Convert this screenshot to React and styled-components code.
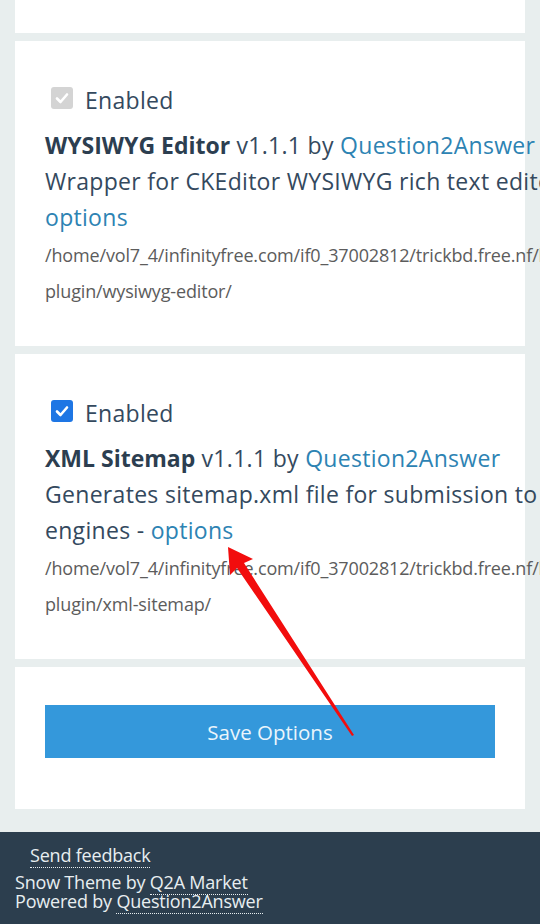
import React from "react";
import styled, { createGlobalStyle } from "styled-components";

const Global = createGlobalStyle`
  html, body { margin: 0; padding: 0; overflow-x: hidden; }
  body {
    background: #e8eeee;
    font-family: "Open Sans", "Noto Sans", sans-serif;
    color: #34495e;
  }
`;

const Page = styled.div`
  position: relative;
  width: 540px;
  overflow: hidden;
`;

const Main = styled.main`
  display: flex;
  flex-direction: column;
  gap: 8px;
  padding: 0 15px;
`;

const Card = styled.section`
  background: #ffffff;
  width: 510px;
  box-sizing: border-box;
  padding: ${(p) => p.$pad || "0"};
  height: ${(p) => (p.$height ? `${p.$height}px` : "auto")};
`;

const Inner = styled.div`
  width: 585px;
  font-size: 23px;
  letter-spacing: 0.3px;
  line-height: 36px;
`;

const EnabledRow = styled.label`
  display: flex;
  align-items: center;
  gap: 12px;
  height: 36px;
  padding-left: 6px;
  color: #34495e;
`;

const Box = styled.span`
  width: 22px;
  height: 22px;
  border-radius: 3px;
  display: flex;
  align-items: center;
  justify-content: center;
  margin-top: -5px;
  background: ${(p) => (p.$disabled ? "#d4d4d4" : "#1e76e4")};
  svg { display: block; }
`;

const Title = styled.div`
  margin-top: 9px;
  color: #34495e;
  b { color: #2c3e50; font-weight: 700; letter-spacing: 0; }
`;

const Link = styled.a`
  color: #2d83b3;
  text-decoration: none;
`;

const Path = styled.div`
  margin-top: 2px;
  font-size: 18px;
  letter-spacing: -0.15px;
  color: #5c5c5c;
`;

const SaveButton = styled.button`
  display: block;
  width: 100%;
  height: 53px;
  border: none;
  background: #3498db;
  color: #eaf5fc;
  font-family: "Open Sans", "Noto Sans", sans-serif;
  font-size: 20.5px;
`;

const Footer = styled.footer`
  margin-top: 23px;
  background: #2c3e4e;
  color: #e8eef1;
  padding: 11px 15px 30px;
  font-size: 18px;
  letter-spacing: -0.2px;
  line-height: 19px;
`;

const FootLink = styled.a`
  color: #e8eef1;
  text-decoration: none;
  border-bottom: 1px dotted #e8eef1;
`;

const FeedbackRow = styled.div`
  padding-left: 15px;
  margin-bottom: 6px;
  line-height: 24px;
`;

const ArrowLayer = styled.svg`
  position: absolute;
  left: 0;
  top: 0;
  pointer-events: none;
`;

const Check = () => (
  <svg width="16" height="16" viewBox="0 0 16 16">
    <path d="M3 8.5 L6.5 12 L13 4.5" fill="none" stroke="#fff" strokeWidth="2.6" strokeLinecap="round" strokeLinejoin="round" />
  </svg>
);

const Plugin = ({ disabled, name, desc, path }) => (
  <Card $pad="41px 30px 37px 30px">
    <Inner>
      <EnabledRow>
        <Box $disabled={disabled}><Check /></Box>
        Enabled
      </EnabledRow>
      <Title>
        <b>{name}</b> v1.1.1 by <Link href="#">Question2Answer</Link>
        <br />
        {desc} - <Link href="#">options</Link>
      </Title>
      <Path>{path}</Path>
    </Inner>
  </Card>
);

export default function App() {
  return (
    <Page>
      <Global />
      <Main>
        <Card $height={33} />
        <Plugin
          disabled
          name="WYSIWYG Editor"
          desc="Wrapper for CKEditor WYSIWYG rich text editor"
          path="/home/vol7_4/infinityfree.com/if0_37002812/trickbd.free.nf/htdocs/qa-plugin/wysiwyg-editor/"
        />
        <Plugin
          name="XML Sitemap"
          desc="Generates sitemap.xml file for submission to search engines"
          path="/home/vol7_4/infinityfree.com/if0_37002812/trickbd.free.nf/htdocs/qa-plugin/xml-sitemap/"
        />
        <Card $pad="38px 30px 51px 30px">
          <SaveButton>Save Options</SaveButton>
        </Card>
      </Main>
      <Footer>
        <FeedbackRow>
          <FootLink href="#">Send feedback</FootLink>
        </FeedbackRow>
        <div>Snow Theme by <FootLink href="#">Q2A Market</FootLink></div>
        <div>Powered by <FootLink href="#">Question2Answer</FootLink></div>
      </Footer>
      <ArrowLayer width="540" height="924" viewBox="0 0 540 924">
        <polygon points="228,547 253,559 244,563 354,735 352,736 237,568 230,575" fill="#f20d0d" />
      </ArrowLayer>
    </Page>
  );
}
